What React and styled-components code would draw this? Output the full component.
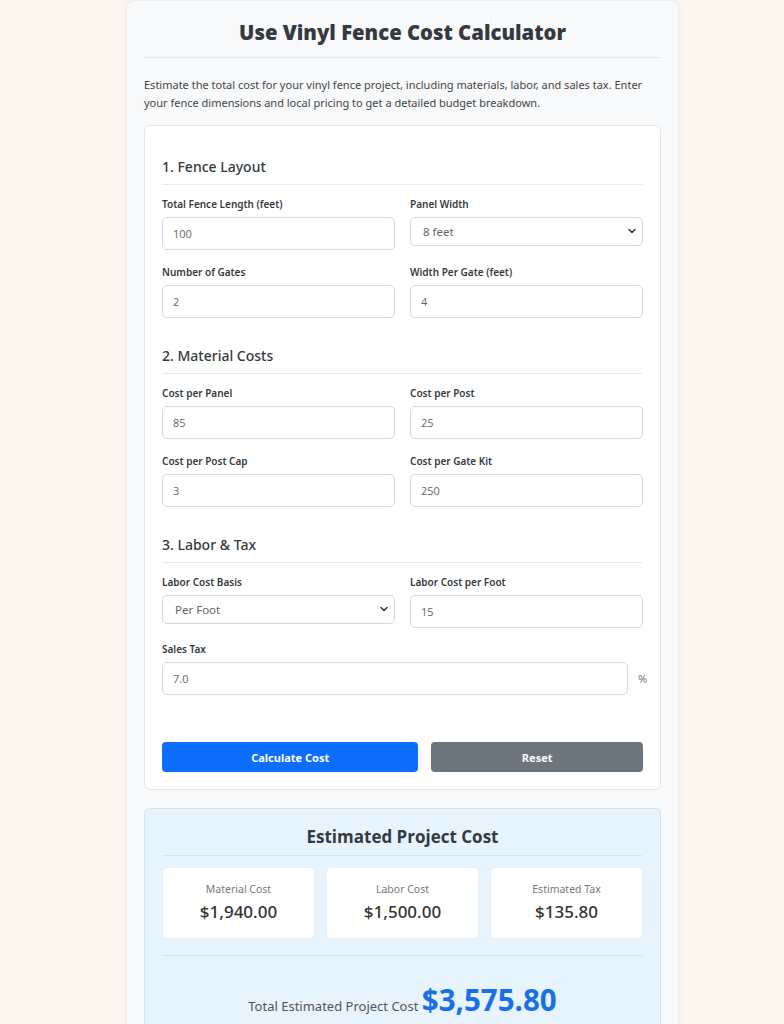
import styled, { createGlobalStyle } from 'styled-components';
import { ChevronDown } from 'lucide-react';

const GlobalStyle = createGlobalStyle`
   body {
      margin: 0;
      background: #fdf6ee;
      font-family: "Noto Sans", "Open Sans", sans-serif;
      color: #333;
   }
   * { box-sizing: border-box; }
`;

function Field({ label, value, select }) {
   return (
      <div>
         <Label>{label}</Label>
         {select ? (
            <SelectWrap>
               <Select defaultValue={value}>
                  <option>{value}</option>
               </Select>
               <Chevron><ChevronDown size={12} strokeWidth={3} /></Chevron>
            </SelectWrap>
         ) : (
            <Input defaultValue={value} />
         )}
      </div>
   )
}

function App() {
   return (
      <>
         <GlobalStyle />
         <Container>
            <Title>Use Vinyl Fence Cost Calculator</Title>
            <Intro>
               Estimate the total cost for your vinyl fence project, including materials, labor, and sales tax. Enter
               your fence dimensions and local pricing to get a detailed budget breakdown.
            </Intro>
            <FormCard>
               <SectionTitle first>1. Fence Layout</SectionTitle>
               <Grid>
                  <Field label="Total Fence Length (feet)" value="100" />
                  <Field label="Panel Width" value="8 feet" select />
                  <Field label="Number of Gates" value="2" />
                  <Field label="Width Per Gate (feet)" value="4" />
               </Grid>
               <SectionTitle>2. Material Costs</SectionTitle>
               <Grid>
                  <Field label="Cost per Panel" value="85" />
                  <Field label="Cost per Post" value="25" />
                  <Field label="Cost per Post Cap" value="3" />
                  <Field label="Cost per Gate Kit" value="250" />
               </Grid>
               <SectionTitle>3. Labor &amp; Tax</SectionTitle>
               <Grid>
                  <Field label="Labor Cost Basis" value="Per Foot" select />
                  <Field label="Labor Cost per Foot" value="15" />
               </Grid>
               <TaxField>
                  <Label>Sales Tax</Label>
                  <TaxRow>
                     <Input defaultValue="7.0" />
                     <Unit>%</Unit>
                  </TaxRow>
               </TaxField>
               <Buttons>
                  <Button>Calculate Cost</Button>
                  <Button secondary>Reset</Button>
               </Buttons>
            </FormCard>
            <ResultCard>
               <ResultTitle>Estimated Project Cost</ResultTitle>
               <Boxes>
                  <Box>
                     <BoxLabel>Material Cost</BoxLabel>
                     <BoxValue>$1,940.00</BoxValue>
                  </Box>
                  <Box>
                     <BoxLabel>Labor Cost</BoxLabel>
                     <BoxValue>$1,500.00</BoxValue>
                  </Box>
                  <Box>
                     <BoxLabel>Estimated Tax</BoxLabel>
                     <BoxValue>$135.80</BoxValue>
                  </Box>
               </Boxes>
               <Total>
                  Total Estimated Project Cost <TotalValue>$3,575.80</TotalValue>
               </Total>
            </ResultCard>
         </Container>
      </>
   )
}
export default App

const Container = styled.div`
   width: 553px;
   margin: 0 0 0 126px;
   padding: 17px 17px 0;
   background: #f8f9fa;
   border: 1px solid #eceef0;
   border-radius: 8px;
   box-shadow: 0 0 6px rgba(0, 0, 0, 0.05);
`;

const Title = styled.h1`
   margin: 0 0 18px;
   padding-bottom: 11px;
   border-bottom: 1px solid #e6e8ea;
   text-align: center;
   font-family: "Open Sans", sans-serif;
   font-size: 20.3px;
   line-height: 28px;
   font-weight: 800;
   color: #343a40;
`;

const Intro = styled.p`
   margin: 0 0 13px;
   font-size: 11px;
   line-height: 18px;
   color: #454545;
`;

const FormCard = styled.div`
   background: #fff;
   border: 1px solid #e2e5e8;
   border-radius: 6px;
   padding: 0 17px 17px;
`;

const SectionTitle = styled.h3`
   margin: ${p => (p.first ? '31px' : '28px')} 0 11px;
   padding-bottom: 7px;
   border-bottom: 1px solid #e9ecef;
   font-size: 14px;
   line-height: 20px;
   font-weight: 500;
   color: #343a40;
`;

const Grid = styled.div`
   display: grid;
   grid-template-columns: 1fr 1fr;
   column-gap: 15px;
   row-gap: 14px;
`;

const Label = styled.label`
   display: block;
   margin-bottom: 5px;
   font-size: 10px;
   line-height: 16px;
   font-weight: 600;
   color: #343a40;
`;

const Input = styled.input`
   display: block;
   width: 100%;
   height: 33px;
   padding: 0 10px;
   border: 1px solid #d5d9dd;
   border-radius: 5px;
   font-family: "Open Sans", sans-serif;
   font-size: 11px;
   color: #666;
   background: #fff;
   outline: none;
`;

const SelectWrap = styled.div`
   position: relative;
`;

const Select = styled.select`
   display: block;
   width: 100%;
   height: 29px;
   padding: 0 12px;
   border: 1px solid #d5d9dd;
   border-radius: 5px;
   font-family: "Noto Sans", sans-serif;
   font-size: 11.5px;
   color: #666;
   background: #fff;
   appearance: none;
   outline: none;
`;

const Chevron = styled.span`
   position: absolute;
   right: 5px;
   top: 8px;
   display: flex;
   color: #333;
   pointer-events: none;
`;

const TaxField = styled.div`
   margin-top: 13px;
`;

const TaxRow = styled.div`
   display: flex;
   align-items: center;
   gap: 10px;
`;

const Unit = styled.span`
   font-size: 11px;
   color: #777;
   width: 5px;
`;

const Buttons = styled.div`
   display: flex;
   gap: 13px;
   margin-top: 47px;
`;

const Button = styled.button`
   flex: ${p => (p.secondary ? '210' : '257')};
   height: 30px;
   border: none;
   border-radius: 4px;
   background: ${p => (p.secondary ? '#6c757d' : '#0d6efd')};
   color: #fff;
   font-family: "Noto Sans", sans-serif;
   font-size: 11px;
   font-weight: 700;
`;

const ResultCard = styled.div`
   margin-top: 18px;
   padding: 15px 18px 14px;
   background: #e7f3fd;
   border: 1px solid #cfe3f4;
   border-radius: 6px 6px 0 0;
   border-bottom: none;
`;

const ResultTitle = styled.h2`
   margin: 0 0 12px;
   padding-bottom: 5px;
   border-bottom: 1px solid #d3e4f2;
   text-align: center;
   font-family: "Open Sans", sans-serif;
   font-size: 17px;
   line-height: 26px;
   font-weight: 700;
   color: #343a40;
`;

const Boxes = styled.div`
   display: grid;
   grid-template-columns: repeat(3, 1fr);
   gap: 13px;
   padding-bottom: 17px;
   border-bottom: 1px solid #cfe1f0;
`;

const Box = styled.div`
   height: 70px;
   padding-top: 13px;
   background: #fff;
   border-radius: 4px;
   text-align: center;
   box-shadow: 0 0 2px rgba(0, 0, 0, 0.04);
`;

const BoxLabel = styled.div`
   font-size: 10.5px;
   line-height: 16px;
   color: #777;
`;

const BoxValue = styled.div`
   margin-top: 3px;
   font-size: 17px;
   line-height: 24px;
   font-weight: 500;
   color: #333;
`;

const Total = styled.div`
   padding-top: 23px;
   text-align: center;
   font-size: 13px;
   color: #555;
`;

const TotalValue = styled.span`
   font-family: "Open Sans", sans-serif;
   font-size: 29.5px;
   font-weight: 700;
   color: #1a6fe6;
`;
